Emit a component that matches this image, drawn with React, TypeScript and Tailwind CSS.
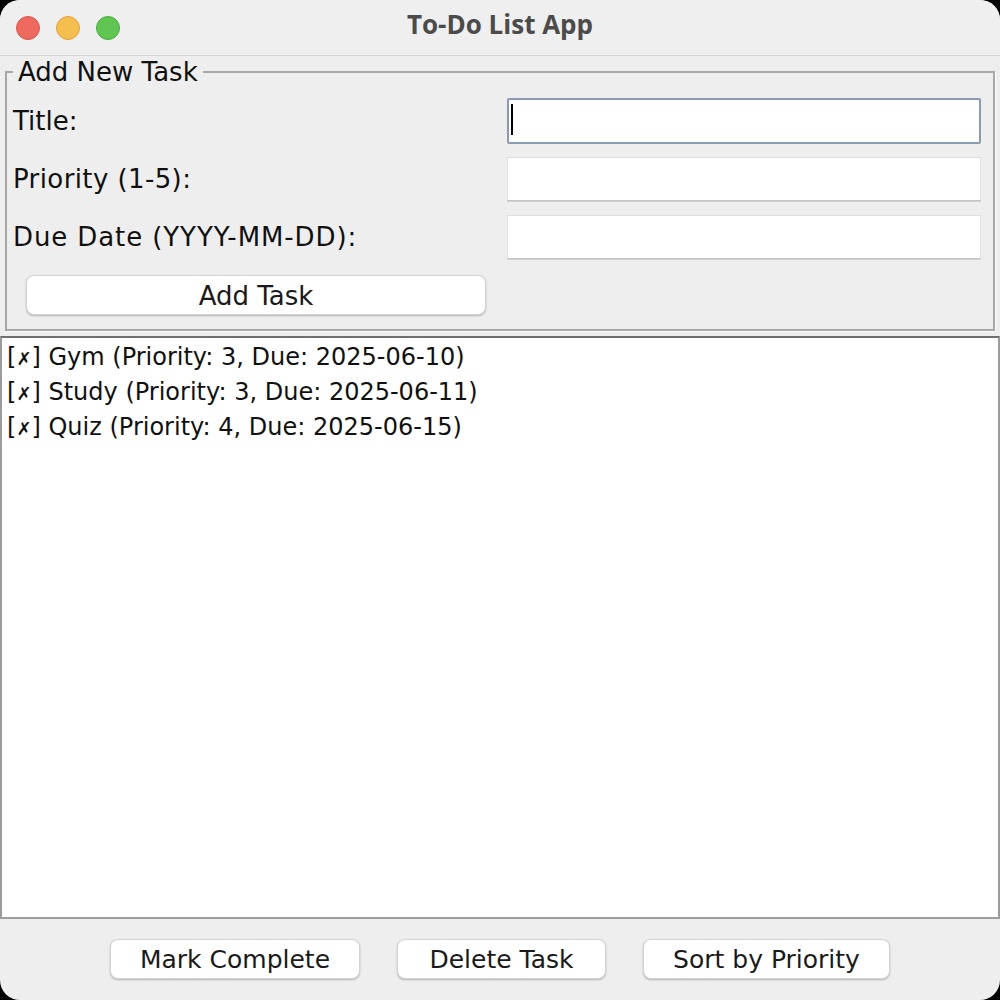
const uiFont = { fontFamily: '"DejaVu Sans", "Liberation Sans", sans-serif' };

const tasks = [
  { title: 'Gym', priority: 3, due: '2025-06-10' },
  { title: 'Study', priority: 3, due: '2025-06-11' },
  { title: 'Quiz', priority: 4, due: '2025-06-15' },
];

function TrafficLights() {
  return (
    <div className="absolute left-[16px] top-[16px] flex gap-[16px]">
      <span className="h-[24px] w-[24px] rounded-full border border-[#d8574c] bg-[#ee6a5f]" />
      <span className="h-[24px] w-[24px] rounded-full border border-[#d9a23c] bg-[#f5bf4f]" />
      <span className="h-[24px] w-[24px] rounded-full border border-[#4dab42] bg-[#61c554]" />
    </div>
  );
}

function Field({ focused = false }: { focused?: boolean }) {
  if (focused) {
    return (
      <div className="relative -my-[1px] h-[46px] rounded-[2px] border-2 border-[#8b9ab0] bg-white">
        <span className="absolute left-[2px] top-[4px] h-[31px] w-[2px] bg-black" />
      </div>
    );
  }
  return <div className="h-[44px] border border-[#dedede] border-b-[#c4c4c4] bg-white shadow-[0_1px_0_#d0d0d0]" />;
}

function AquaButton({ label, width, size = 'text-[26px]' }: { label: string; width: string; size?: string }) {
  return (
    <button
      className={`h-[40px] ${width} ${size} rounded-[8px] border border-[#d4d4d4] bg-white leading-[40px] text-[#1a1a1a] shadow-[0_1px_2px_rgba(0,0,0,0.25)]`}
    >
      {label}
    </button>
  );
}

export default function App() {
  return (
    <div className="h-[1000px] w-[1000px] bg-black" style={uiFont}>
      <div className="flex h-full w-full flex-col overflow-hidden rounded-[20px] bg-[#eeeeee]">
        {/* title bar */}
        <div className="relative flex h-[56px] shrink-0 items-center justify-center border-b border-[#d4d4d4] bg-[#efefef]">
          <TrafficLights />
          <span
            className="-mt-[6px] text-[26px] font-bold text-[#4b4b4b]"
            style={{ fontFamily: '"Open Sans", "Liberation Sans", sans-serif' }}
          >
            To-Do List App
          </span>
        </div>

        {/* add task form */}
        <fieldset className="mx-[5px] mt-[1px] rounded-none border-2 border-[#a7a7a7] px-[6px] pb-[12px] pt-[12px] shadow-[1px_1px_0_#ffffff]">
          <legend className="px-[5px] text-[26px] leading-[30px] text-[#111]">Add New Task</legend>
          <div className="grid grid-cols-[484px_474px] gap-x-[10px] gap-y-[14px] text-[26px] text-[#111]">
            <div className="flex h-[44px] items-center">Title:</div>
            <Field focused />
            <div className="flex h-[44px] items-center tracking-[0.4px]">Priority (1-5):</div>
            <Field />
            <div className="flex h-[44px] items-center tracking-[0.9px]">Due Date (YYYY-MM-DD):</div>
            <Field />
            <div className="flex h-[44px] items-center pl-[13px]">
              <AquaButton label="Add Task" width="w-[460px]" />
            </div>
            <div />
          </div>
        </fieldset>

        {/* task list */}
        <div className="mt-[5px] h-[583px] shrink-0 border-2 border-[#9c9c9c] border-t-[#6f6f6f] bg-white pl-[5px] pt-[2px] text-[24px] text-[#111]">
          {tasks.map((t) => (
            <div key={t.title} className="h-[35px] leading-[35px]">
              [<span className="text-[18px] font-bold leading-none">✗</span>] {t.title} (Priority: {t.priority}, Due: {t.due})
            </div>
          ))}
        </div>

        {/* actions */}
        <div className="flex flex-1 justify-center gap-[37px] pt-[20px]">
          <AquaButton label="Mark Complete" width="w-[250px]" size="text-[25px]" />
          <AquaButton label="Delete Task" width="w-[209px]" size="text-[25px]" />
          <AquaButton label="Sort by Priority" width="w-[247px]" size="text-[25px]" />
        </div>
      </div>
    </div>
  );
}
